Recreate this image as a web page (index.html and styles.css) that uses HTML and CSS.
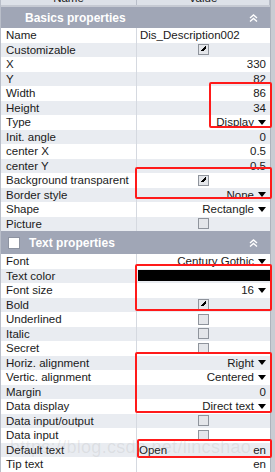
FILE: index.html
```html
<!DOCTYPE html>
<html>
<head>
<meta charset="utf-8">
<link rel="stylesheet" href="styles.css">
</head>
<body>
<div class="panel">
  <div class="grid">
    <div class="colhead"><span>Name</span><span>Value</span></div>

    <div class="section first">
      <span class="title">Basics properties</span>
      <svg class="chev" width="9" height="8" viewBox="0 0 9 8"><path d="M1 4 L4.5 1 L8 4 M1 7.5 L4.5 4.5 L8 7.5" fill="none" stroke="#fff" stroke-width="1.4"/></svg>
    </div>

    <div class="row"><div class="k">Name</div><div class="v left">Dis_Description002</div></div>
    <div class="row alt"><div class="k">Customizable</div><div class="v center"><span class="cb on"></span></div></div>
    <div class="row"><div class="k">X</div><div class="v">330</div></div>
    <div class="row alt"><div class="k">Y</div><div class="v">82</div></div>
    <div class="row"><div class="k">Width</div><div class="v">86</div></div>
    <div class="row alt"><div class="k">Height</div><div class="v">34</div></div>
    <div class="row"><div class="k">Type</div><div class="v dd">Display<i class="tri"></i></div></div>
    <div class="row alt"><div class="k">Init. angle</div><div class="v">0</div></div>
    <div class="row"><div class="k">center X</div><div class="v">0.5</div></div>
    <div class="row alt"><div class="k">center Y</div><div class="v">0.5</div></div>
    <div class="row"><div class="k">Background transparent</div><div class="v center"><span class="cb on"></span></div></div>
    <div class="row alt"><div class="k">Border style</div><div class="v dd">None<i class="tri"></i></div></div>
    <div class="row"><div class="k">Shape</div><div class="v dd">Rectangle<i class="tri"></i></div></div>
    <div class="row alt"><div class="k">Picture</div><div class="v center"><span class="cb"></span></div></div>

    <div class="section">
      <span class="hcb"></span>
      <span class="title">Text properties</span>
      <svg class="chev" width="9" height="8" viewBox="0 0 9 8"><path d="M1 4 L4.5 1 L8 4 M1 7.5 L4.5 4.5 L8 7.5" fill="none" stroke="#fff" stroke-width="1.4"/></svg>
    </div>

    <div class="row"><div class="k">Font</div><div class="v dd">Century Gothic<i class="tri"></i></div></div>
    <div class="row alt"><div class="k">Text color</div><div class="v swatch-cell"><span class="swatch"></span></div></div>
    <div class="row"><div class="k">Font size</div><div class="v dd">16<i class="tri"></i></div></div>
    <div class="row alt"><div class="k">Bold</div><div class="v center"><span class="cb on"></span></div></div>
    <div class="row"><div class="k">Underlined</div><div class="v center"><span class="cb"></span></div></div>
    <div class="row alt"><div class="k">Italic</div><div class="v center"><span class="cb"></span></div></div>
    <div class="row"><div class="k">Secret</div><div class="v center"><span class="cb"></span></div></div>
    <div class="row alt"><div class="k">Horiz. alignment</div><div class="v dd">Right<i class="tri"></i></div></div>
    <div class="row"><div class="k">Vertic. alignment</div><div class="v dd">Centered<i class="tri"></i></div></div>
    <div class="row alt"><div class="k">Margin</div><div class="v">0</div></div>
    <div class="row"><div class="k">Data display</div><div class="v dd">Direct text<i class="tri"></i></div></div>
    <div class="row alt"><div class="k">Data input/output</div><div class="v center"><span class="cb"></span></div></div>
    <div class="row"><div class="k">Data input</div><div class="v center"><span class="cb"></span></div></div>
    <div class="row alt"><div class="k">Default text</div><div class="v split"><span>Open</span><span class="lang">en</span></div></div>
    <div class="row"><div class="k">Tip text</div><div class="v split"><span></span><span class="lang">en</span></div></div>
  </div>
  <div class="scroll"></div>
</div>

<div class="mark m1"></div>
<div class="mark m2"></div>
<div class="mark m3"></div>
<div class="mark m4"></div>
<div class="mark m5"></div>
<div class="watermark">https://blog.csdn.net/lincshao</div>
</body>
</html>
```

FILE: styles.css
```css
html, body {
  margin: 0;
  padding: 0;
  width: 275px;
  height: 472px;
  overflow: hidden;
  background: #ffffff;
  font-family: "Liberation Sans", Arial, sans-serif;
  font-size: 11.5px;
  color: #1a1a1a;
}

.panel {
  display: flex;
  width: 275px;
  height: 472px;
}

.grid {
  flex: 1;
  display: flex;
  flex-direction: column;
  border-left: 1px solid #b9bec9;
}

.scroll {
  width: 4px;
  background: #c9ccd3;
  border-left: 1px solid #aeb3bd;
}

.colhead {
  height: 5px;
  overflow: hidden;
  display: grid;
  grid-template-columns: 136px 1fr;
  background: #dde1e8;
  border-bottom: 2px solid #c6cad3;
}
.colhead span {
  text-align: center;
  display: block;
  height: 14px;
  line-height: 14px;
  margin-top: -9px;
  border-right: 1px solid #b9bec9;
}

.section {
  height: 23px;
  display: flex;
  align-items: center;
  background: #a0a6b6;
  color: #ffffff;
  font-weight: bold;
  font-size: 12px;
  padding-left: 7px;
  padding-right: 12px;
}
.section.first {
  height: 21px;
  padding-left: 0;
  position: relative;
}
.section .title { flex: 1; }
.section.first .title {
  flex: none;
  margin-left: 24px;
  margin-right: auto;
}
.section .chev { flex: none; }
.section.first .chev { position: absolute; right: 12px; top: 7px; }

.hcb {
  width: 10px;
  height: 10px;
  background: #ffffff;
  border: 1px solid #8d93a1;
  margin-right: 9px;
}

.row {
  height: 14.5px;
  display: grid;
  grid-template-columns: 136px 1fr;
  background: #ffffff;
}
.row.alt { background: #e9ecf1; }

.k {
  padding-left: 5px;
  line-height: 14.5px;
  white-space: nowrap;
  border-right: 1px solid #d5d9e0;
  overflow: hidden;
}

.v {
  line-height: 14.5px;
  text-align: right;
  padding-right: 4px;
  white-space: nowrap;
  display: flex;
  align-items: center;
  justify-content: flex-end;
}
.v.left { justify-content: flex-start; padding-left: 3px; }
.v.center { justify-content: center; padding-right: 0; padding-left: 0; }
.v.dd { padding-right: 4px; }
.v.split { justify-content: space-between; padding-left: 2px; padding-right: 4px; }

.tri {
  display: inline-block;
  width: 0;
  height: 0;
  border-left: 4.5px solid transparent;
  border-right: 4.5px solid transparent;
  border-top: 5px solid #000000;
  margin-left: 4px;
}

.cb {
  width: 9px;
  height: 9px;
  border: 1px solid #8f949c;
  background: #e4e6ea;
  position: relative;
}
.cb.on::after {
  content: "";
  position: absolute;
  left: 2px;
  top: 1px;
  width: 5px;
  height: 5px;
  background:
    linear-gradient(135deg, transparent 45%, #000 45%, #000 75%, transparent 75%);
}

.swatch-cell { padding: 1px 0 1px 1px; }
.swatch {
  display: block;
  width: 100%;
  height: 11px;
  background: #000000;
}

.lang { padding-left: 2px; }

.mark {
  position: absolute;
  border: 2px solid #ff1a1a;
  border-radius: 2px;
  box-sizing: border-box;
}
.m1 { left: 209px; top: 82px; width: 63px; height: 46px; }
.m2 { left: 135px; top: 167px; width: 137px; height: 32px; }
.m3 { left: 135px; top: 264px; width: 137px; height: 47px; }
.m4 { left: 135px; top: 352px; width: 137px; height: 61px; }
.m5 { left: 137px; top: 439px; width: 135px; height: 19px; }

.watermark {
  position: absolute;
  left: 10px;
  top: 437px;
  font-size: 18px;
  color: rgba(150, 150, 150, 0.16);
  white-space: nowrap;
  letter-spacing: 0.3px;
  pointer-events: none;
}
```
